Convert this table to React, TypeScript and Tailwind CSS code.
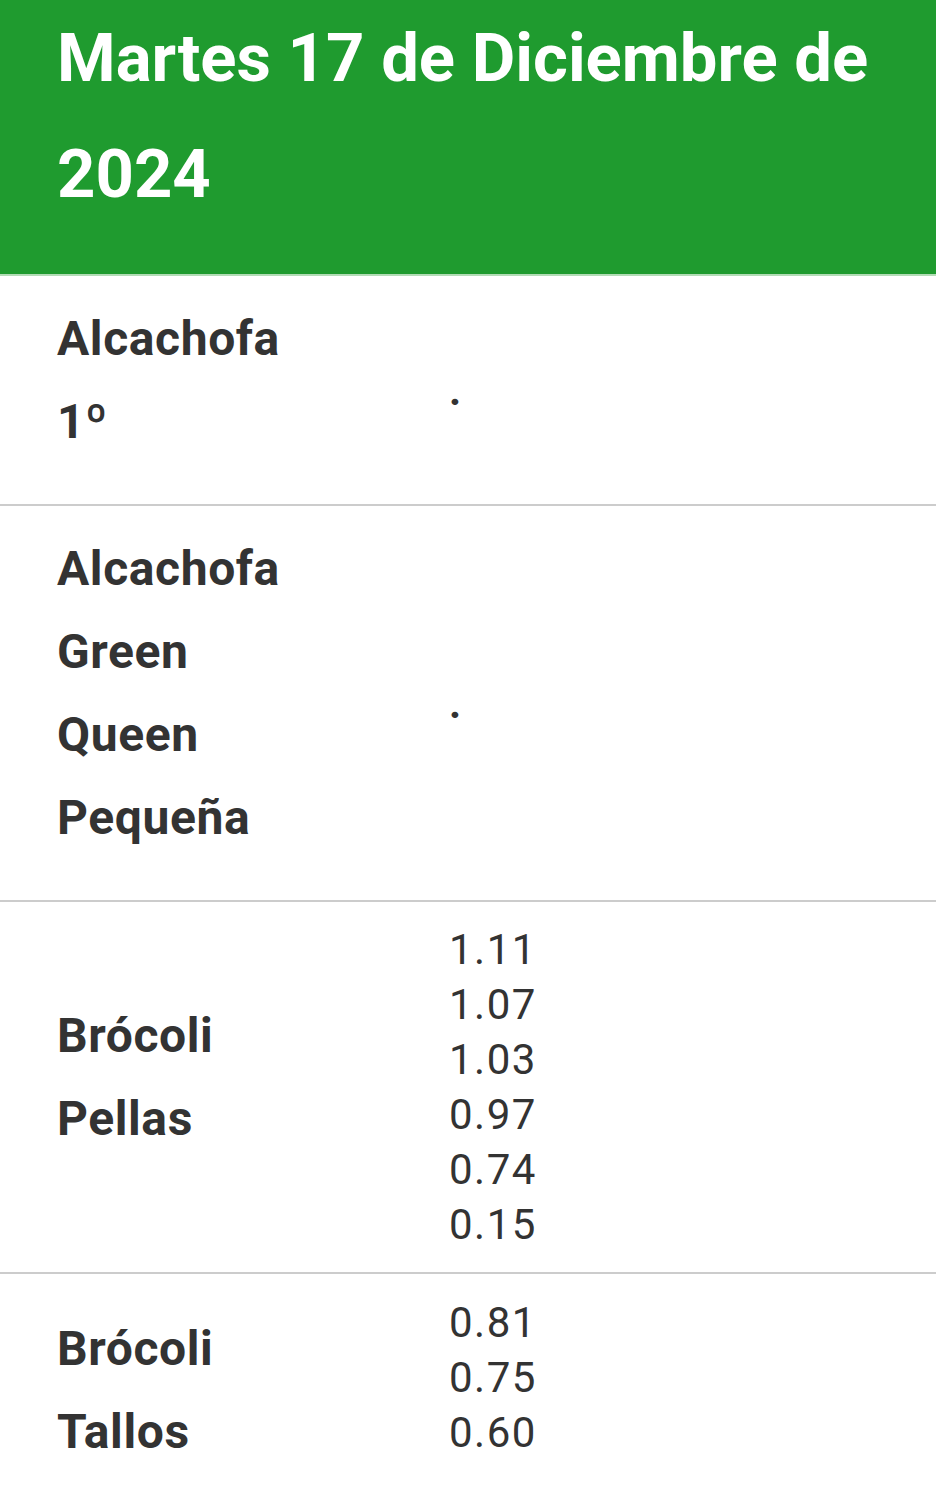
export default function App() {
  const rows: { name: string[]; values: string[]; last?: boolean }[] = [
    { name: ["Alcachofa", "1º"], values: ["."] },
    { name: ["Alcachofa", "Green", "Queen", "Pequeña"], values: ["."] },
    { name: ["Brócoli", "Pellas"], values: ["1.11", "1.07", "1.03", "0.97", "0.74", "0.15"] },
    { name: ["Brócoli", "Tallos"], values: ["0.81", "0.75", "0.60"], last: true },
  ];
  return (
    <div className="min-h-[1504px] bg-white" style={{ fontFamily: "Roboto, 'Noto Sans', sans-serif" }}>
      <div className="bg-[#1f9b2f] border-b-2 border-[#b3dcb6] pl-[57px] pr-[40px] pt-0 pb-[42px]">
        <h1 className="text-white font-bold text-[67px] leading-[116px]">
          Martes 17 de Diciembre de 2024
        </h1>
      </div>
      {rows.map((r, i) => (
        <div
          key={i}
          className={
            r.last
              ? "flex items-start"
              : "flex items-center border-b-2 border-[#cccccc]"
          }
        >
          <div
            className={
              r.last
                ? "w-[449px] shrink-0 pl-[57px] pt-[33px] pb-[29px] text-[#333333] font-bold text-[48px] leading-[83px] tracking-[0.6px]"
                : "w-[449px] shrink-0 pl-[57px] pt-[21px] pb-[41px] text-[#333333] font-bold text-[48px] leading-[83px] tracking-[0.6px]"
            }
          >
            {r.name.map((n, j) => (
              <div key={j}>{n}</div>
            ))}
          </div>
          <div
            className={
              r.last
                ? "pt-[21px] pb-[20px] text-[#333333] text-[42px] leading-[55px] tracking-[1.5px]"
                : "py-[20px] text-[#333333] text-[42px] leading-[55px] tracking-[1.5px]"
            }
          >
            {r.values.map((v, j) => (
              <div key={j} className={v === "." ? "font-bold" : ""}>
                {v}
              </div>
            ))}
          </div>
        </div>
      ))}
    </div>
  );
}
